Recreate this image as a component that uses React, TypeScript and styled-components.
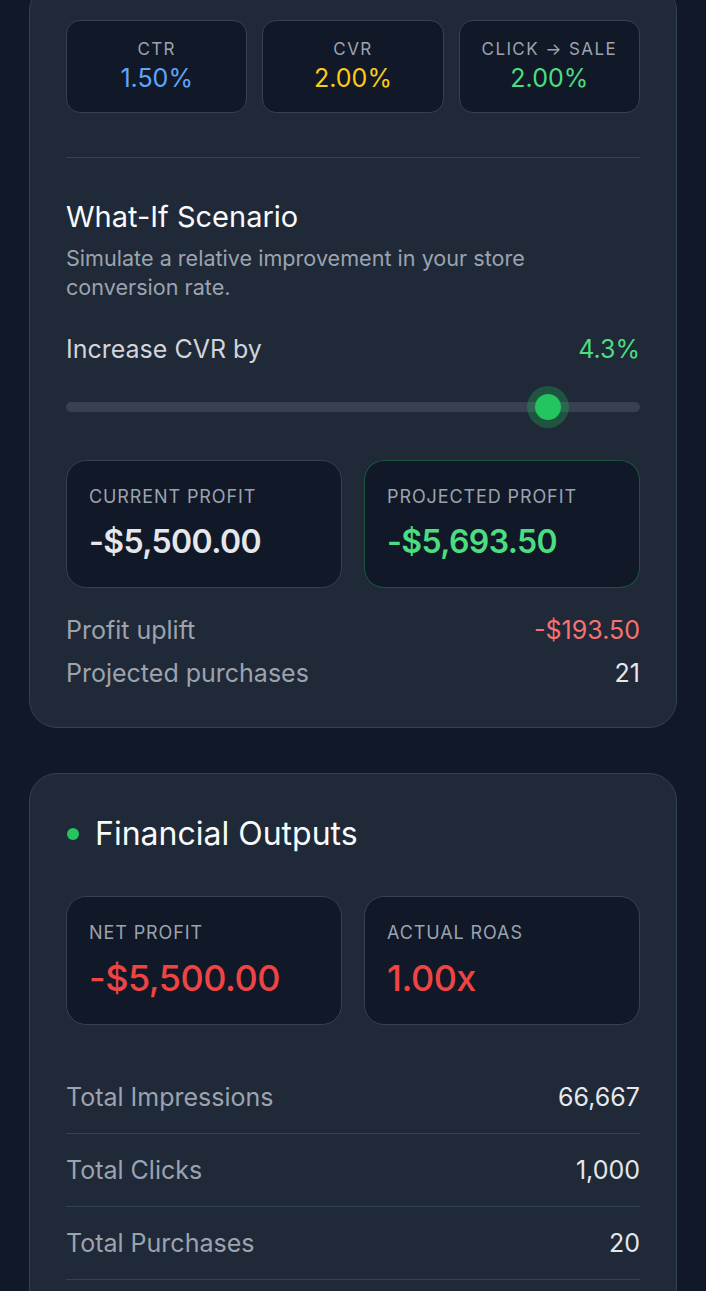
import React, { useState } from "react";
import styled, { createGlobalStyle } from "styled-components";

const Global = createGlobalStyle`
  html, body { margin: 0; padding: 0; background: #111827; }
  body { font-family: Inter, "Noto Sans", sans-serif; color: #f3f4f6; -webkit-font-smoothing: antialiased; }
  * { box-sizing: border-box; }
`;

const Page = styled.div`
  margin-top: -17px;
  padding: 0 29px 40px;
  display: flex;
  flex-direction: column;
  gap: 45px;
`;

const Card = styled.section<{ $pt: number; $pb: number }>`
  background: #1f2937;
  border: 1px solid #334155;
  border-radius: 28px;
  padding: ${(p) => p.$pt}px 36px ${(p) => p.$pb}px;
  display: flex;
  flex-direction: column;
`;

const MetricGrid = styled.div`
  display: grid;
  grid-template-columns: repeat(3, 1fr);
  gap: 15px;
`;

const MetricBox = styled.div`
  height: 93px;
  background: #111827;
  border: 1px solid #374151;
  border-radius: 14px;
  display: flex;
  flex-direction: column;
  align-items: center;
  justify-content: center;
  gap: 3px;
`;

const MetricLabel = styled.div`
  font-size: 17px;
  line-height: 21px;
  letter-spacing: 1.4px;
  color: #9ca3af;
  text-transform: uppercase;
`;

const MetricValue = styled.div<{ $color: string }>`
  font-size: 25px;
  line-height: 31px;
  color: ${(p) => p.$color};
`;

const Divider = styled.hr`
  border: 0;
  height: 1px;
  background: #374151;
  margin: 44px 0 0;
`;

const Heading = styled.h2`
  margin: 42px 0 0;
  font-size: 29px;
  line-height: 34px;
  font-weight: 400;
  color: #f9fafb;
`;

const Description = styled.p`
  margin: 10px 0 0;
  font-size: 21.6px;
  line-height: 29px;
  color: #9ca3af;
  max-width: 490px;
`;

const SliderHead = styled.div`
  margin-top: 32px;
  display: flex;
  justify-content: space-between;
  align-items: center;
  font-size: 25px;
  line-height: 30px;
`;

const SliderLabel = styled.span`
  color: #d1d5db;
`;

const SliderValue = styled.span`
  color: #4ade80;
`;

const SliderArea = styled.div`
  margin-top: 22px;
  height: 42px;
  position: relative;
  display: flex;
  align-items: center;
`;

const Track = styled.div`
  width: 100%;
  height: 10px;
  border-radius: 5px;
  background: #374151;
`;

const Thumb = styled.div`
  position: absolute;
  top: 50%;
  width: 26px;
  height: 26px;
  border-radius: 50%;
  background: #22c55e;
  transform: translate(-50%, -50%);
  box-shadow: 0 0 0 8px rgba(34, 197, 94, 0.28);
`;

const ProfitGrid = styled.div<{ $mt: number }>`
  margin-top: ${(p) => p.$mt}px;
  display: grid;
  grid-template-columns: 1fr 1fr;
  gap: 22px;
`;

const ProfitBox = styled.div<{ $accent?: boolean; $gap: number; $h: number }>`
  height: ${(p) => p.$h}px;
  background: #111827;
  border: 1px solid ${(p) => (p.$accent ? "rgba(34,197,94,0.35)" : "#374151")};
  border-radius: 20px;
  padding: 25px 22px 0;
  display: flex;
  flex-direction: column;
  gap: ${(p) => p.$gap}px;
`;

const ProfitLabel = styled.div`
  font-size: 18px;
  line-height: 22px;
  letter-spacing: 0.9px;
  color: #9ca3af;
  text-transform: uppercase;
`;

const ProfitValue = styled.div<{ $color: string; $size: number; $weight: number; $track: number }>`
  font-size: ${(p) => p.$size}px;
  line-height: ${(p) => p.$size + 8}px;
  font-weight: ${(p) => p.$weight};
  color: ${(p) => p.$color};
  letter-spacing: ${(p) => p.$track}px;
`;

const SummaryList = styled.div`
  margin-top: 27px;
  display: flex;
  flex-direction: column;
  gap: 13px;
`;

const SummaryRow = styled.div`
  display: flex;
  justify-content: space-between;
  font-size: 25px;
  line-height: 30px;
`;

const RowLabel = styled.span`
  color: #9ca3af;
`;

const RowValue = styled.span<{ $color?: string }>`
  color: ${(p) => p.$color ?? "#e5e7eb"};
`;

const TitleRow = styled.div`
  display: flex;
  align-items: center;
  gap: 16px;
  padding-left: 1px;
`;

const Dot = styled.span`
  width: 12px;
  height: 12px;
  border-radius: 50%;
  background: #22c55e;
  flex-shrink: 0;
`;

const CardTitle = styled.h2`
  margin: 0;
  font-size: 32px;
  line-height: 38px;
  font-weight: 400;
  color: #f9fafb;
`;

const StatList = styled.div`
  margin-top: 36px;
  display: flex;
  flex-direction: column;
`;

const StatRow = styled.div`
  display: flex;
  justify-content: space-between;
  padding: 21px 0;
  border-bottom: 1px solid #334155;
  font-size: 25px;
  line-height: 30px;
`;

export default function App() {
  const [uplift] = useState(4.3);
  const thumbPct = 84;
  return (
    <>
      <Global />
      <Page>
        <Card $pt={36} $pb={39}>
          <MetricGrid>
            <MetricBox>
              <MetricLabel>CTR</MetricLabel>
              <MetricValue $color="#60a5fa">1.50%</MetricValue>
            </MetricBox>
            <MetricBox>
              <MetricLabel>CVR</MetricLabel>
              <MetricValue $color="#facc15">2.00%</MetricValue>
            </MetricBox>
            <MetricBox>
              <MetricLabel>Click → Sale</MetricLabel>
              <MetricValue $color="#4ade80">2.00%</MetricValue>
            </MetricBox>
          </MetricGrid>
          <Divider />
          <Heading>What-If Scenario</Heading>
          <Description>Simulate a relative improvement in your store conversion rate.</Description>
          <SliderHead>
            <SliderLabel>Increase CVR by</SliderLabel>
            <SliderValue>{uplift}%</SliderValue>
          </SliderHead>
          <SliderArea>
            <Track />
            <Thumb style={{ left: `${thumbPct}%` }} />
          </SliderArea>
          <ProfitGrid $mt={32}>
            <ProfitBox $gap={14} $h={128}>
              <ProfitLabel>Current Profit</ProfitLabel>
              <ProfitValue $color="#e5e7eb" $size={32} $weight={600} $track={-0.6}>-$5,500.00</ProfitValue>
            </ProfitBox>
            <ProfitBox $accent $gap={14} $h={128}>
              <ProfitLabel>Projected Profit</ProfitLabel>
              <ProfitValue $color="#4ade80" $size={32} $weight={600} $track={-0.6}>-$5,693.50</ProfitValue>
            </ProfitBox>
          </ProfitGrid>
          <SummaryList>
            <SummaryRow>
              <RowLabel>Profit uplift</RowLabel>
              <RowValue $color="#f87171">-$193.50</RowValue>
            </SummaryRow>
            <SummaryRow>
              <RowLabel>Projected purchases</RowLabel>
              <RowValue>21</RowValue>
            </SummaryRow>
          </SummaryList>
        </Card>
        <Card $pt={41} $pb={40}>
          <TitleRow>
            <Dot />
            <CardTitle>Financial Outputs</CardTitle>
          </TitleRow>
          <ProfitGrid $mt={43}>
            <ProfitBox $gap={12} $h={129}>
              <ProfitLabel>Net Profit</ProfitLabel>
              <ProfitValue $color="#ef4444" $size={36} $weight={500} $track={-0.5}>-$5,500.00</ProfitValue>
            </ProfitBox>
            <ProfitBox $gap={12} $h={129}>
              <ProfitLabel>Actual ROAS</ProfitLabel>
              <ProfitValue $color="#ef4444" $size={36} $weight={500} $track={-0.5}>1.00x</ProfitValue>
            </ProfitBox>
          </ProfitGrid>
          <StatList>
            <StatRow>
              <RowLabel>Total Impressions</RowLabel>
              <RowValue>66,667</RowValue>
            </StatRow>
            <StatRow>
              <RowLabel>Total Clicks</RowLabel>
              <RowValue>1,000</RowValue>
            </StatRow>
            <StatRow>
              <RowLabel>Total Purchases</RowLabel>
              <RowValue>20</RowValue>
            </StatRow>
          </StatList>
        </Card>
      </Page>
    </>
  );
}
